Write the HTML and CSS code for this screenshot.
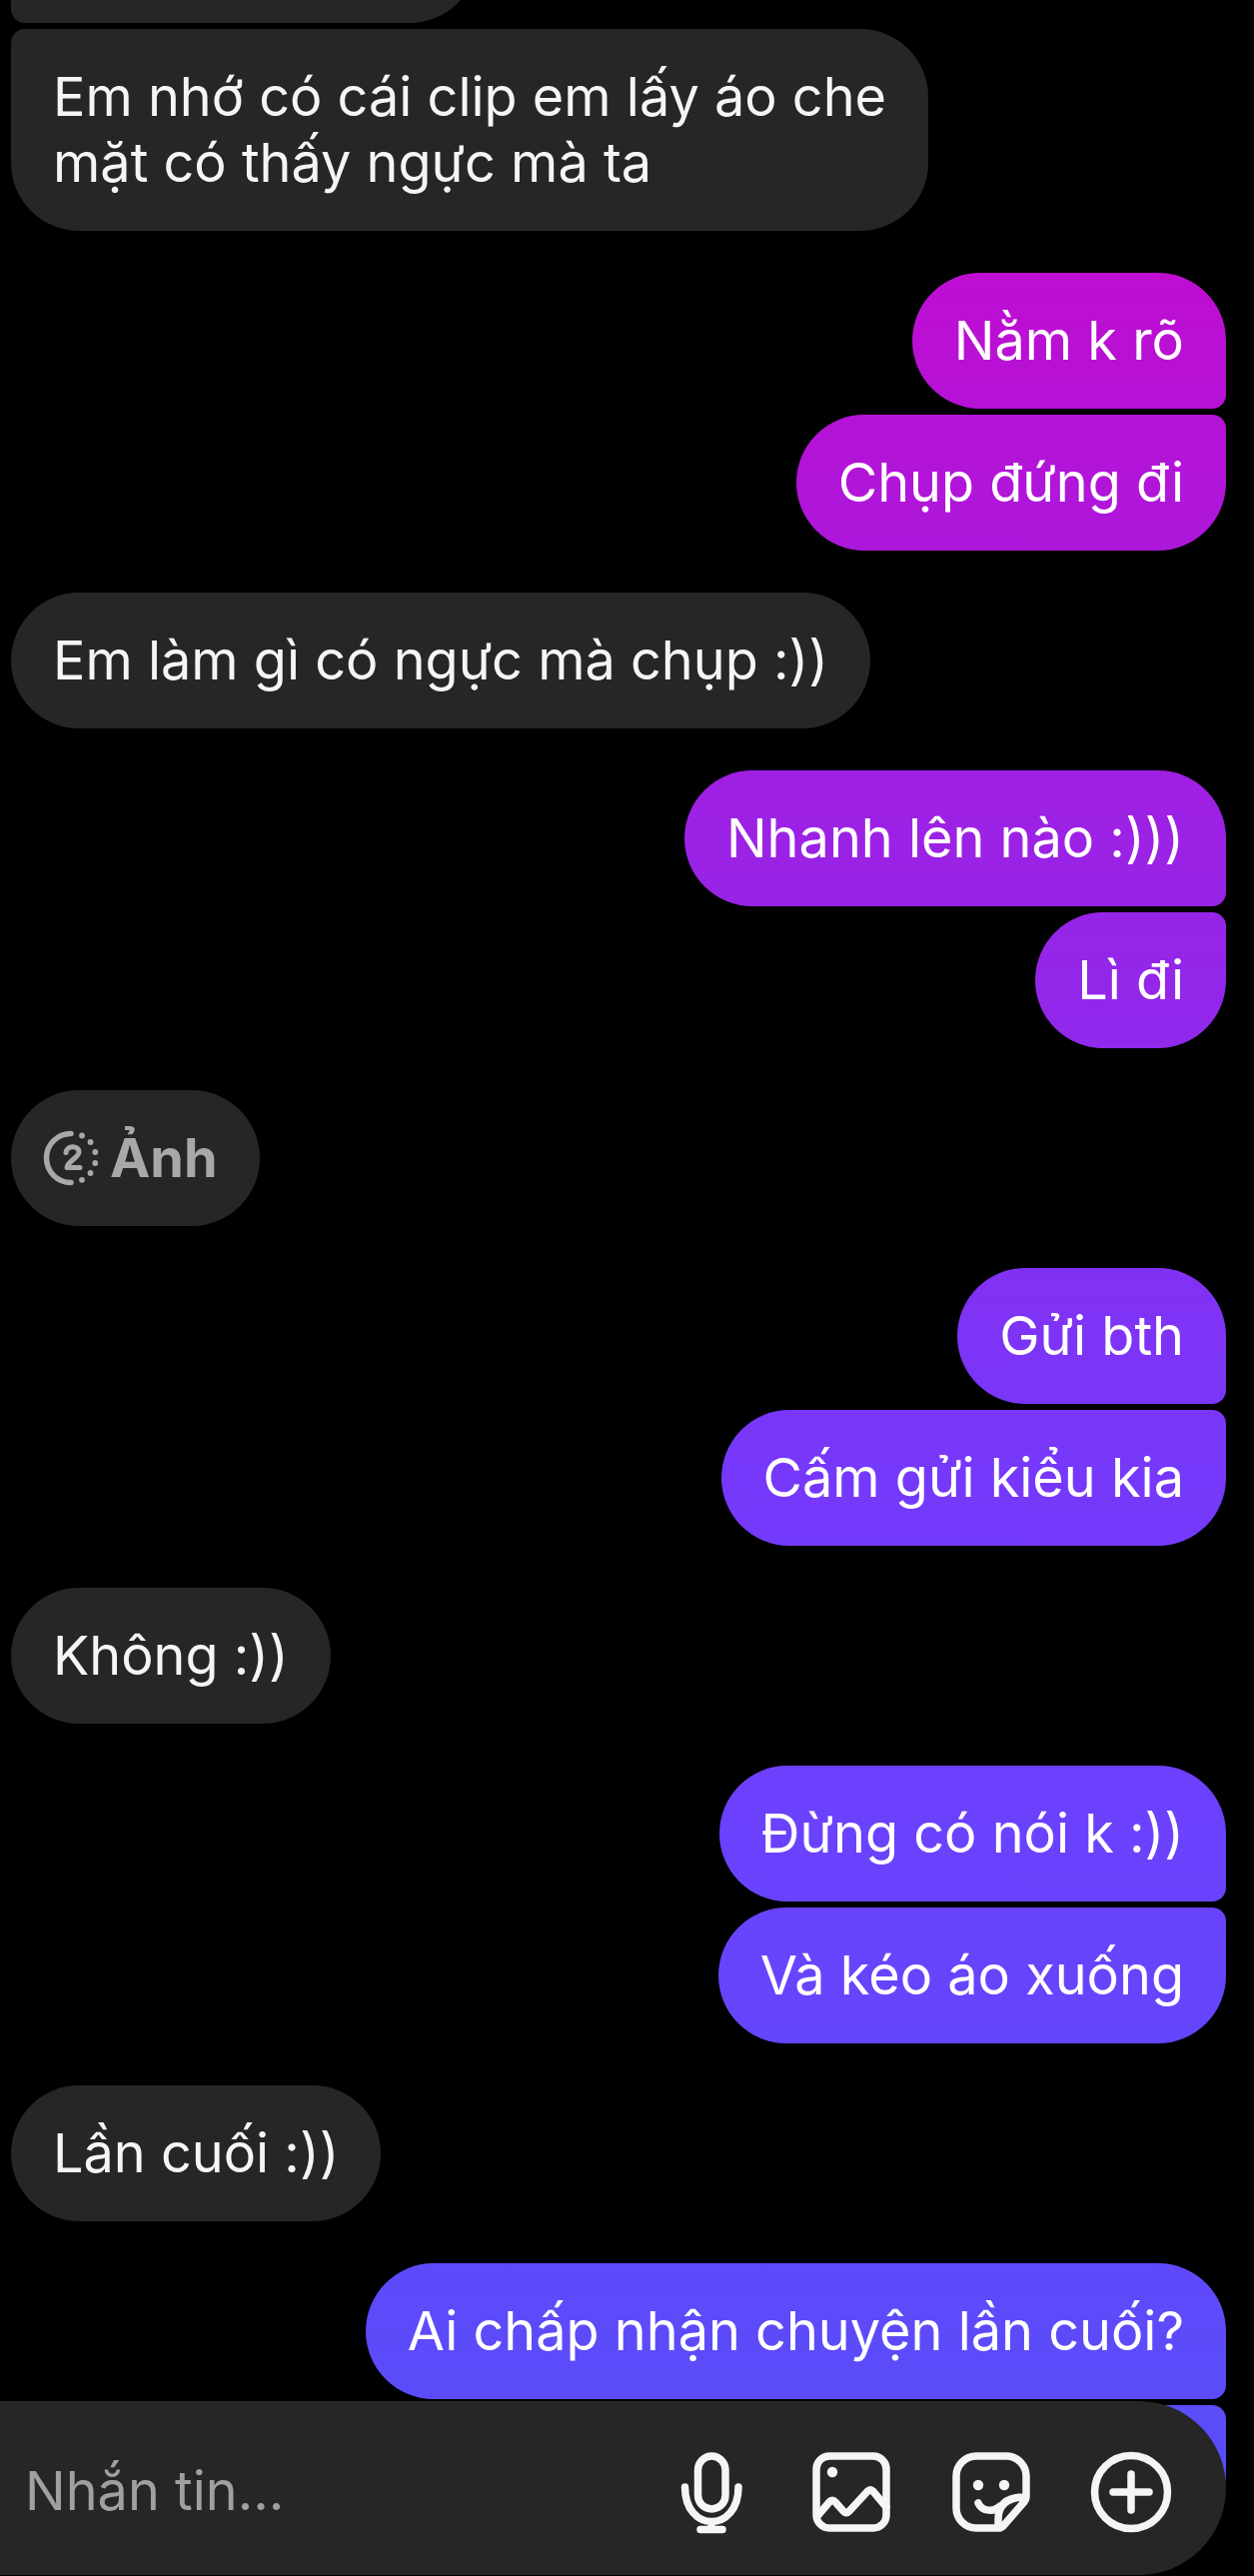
FILE: index.html
```html
<!DOCTYPE html>
<html lang="vi">
<head>
<meta charset="utf-8">
<meta name="viewport" content="width=device-width, initial-scale=1">
<title>Tin nhắn</title>
<link rel="stylesheet" href="styles.css">
</head>
<body>
<main class="thread">
  <section class="group received">
    <p class="bubble clipped"></p>
    <p class="bubble">Em nhớ có cái clip em lấy áo che<br>mặt có thấy ngực mà ta</p>
  </section>
  <section class="group sent">
    <p class="bubble">Nằm k rõ</p>
    <p class="bubble">Chụp đứng đi</p>
  </section>
  <section class="group received">
    <p class="bubble">Em làm gì có ngực mà chụp :))</p>
  </section>
  <section class="group sent">
    <p class="bubble">Nhanh lên nào :)))</p>
    <p class="bubble">Lì đi</p>
  </section>
  <section class="group received">
    <p class="bubble photo">
      <svg class="photo-icon" viewBox="0 0 56 56" aria-hidden="true">
        <path d="M28 3.500A24.500 24.500 0 0 0 28 52.500" fill="none" stroke="currentColor" stroke-width="5.500" stroke-linecap="round"/>
        <path d="M23 22.500C23.500 15 36 15 36 22C36 27.500 24.500 31 24 37.500H37" fill="none" stroke="currentColor" stroke-width="5" stroke-linecap="round" stroke-linejoin="round"/>
        <g fill="currentColor">
          <circle cx="39" cy="5.500" r="2.900"/><circle cx="47.500" cy="12" r="2.900"/><circle cx="52.300" cy="22" r="2.900"/>
          <circle cx="52.300" cy="33" r="2.900"/><circle cx="47.500" cy="43" r="2.900"/><circle cx="39" cy="49.800" r="2.900"/>
        </g>
      </svg>
      <span>Ảnh</span>
    </p>
  </section>
  <section class="group sent">
    <p class="bubble">Gửi bth</p>
    <p class="bubble">Cấm gửi kiểu kia</p>
  </section>
  <section class="group received">
    <p class="bubble">Không :))</p>
  </section>
  <section class="group sent">
    <p class="bubble">Đừng có nói k :))</p>
    <p class="bubble">Và kéo áo xuống</p>
  </section>
  <section class="group received">
    <p class="bubble">Lần cuối :))</p>
  </section>
  <section class="group sent">
    <p class="bubble">Ai chấp nhận chuyện lần cuối?</p>
    <p class="bubble clipped"></p>
  </section>
</main>
<form class="composer">
  <input class="composer-input" type="text" placeholder="Nhắn tin..." aria-label="Nhắn tin">
  <button class="tool" type="button" aria-label="Ghi âm">
    <svg viewBox="0 0 96 96"><g fill="none" stroke="currentColor" stroke-width="7.500" stroke-linecap="round" stroke-linejoin="round"><rect x="34.500" y="14" width="27.500" height="53" rx="13.750"/><path d="M21.500 45C21.500 91 75 91 75 45M48 80V87M37 87.500H59"/></g></svg>
  </button>
  <button class="tool" type="button" aria-label="Ảnh">
    <svg viewBox="0 0 96 96"><g fill="none" stroke="currentColor" stroke-width="7.500" stroke-linecap="round" stroke-linejoin="round"><rect x="13" y="14" width="70" height="72" rx="13"/><path d="M14 74L26 60Q29 56.500 32 60L40 69Q43 72 46 69L64 49.500Q67 46.500 70 49.500L83 65"/></g><circle cx="29" cy="30" r="5.200" fill="currentColor"/></svg>
  </button>
  <button class="tool" type="button" aria-label="Nhãn dán">
    <svg viewBox="0 0 96 96"><g fill="none" stroke="currentColor" stroke-width="7.500" stroke-linecap="round" stroke-linejoin="round"><path d="M55 86H33A20 20 0 0 1 13 66V34A20 20 0 0 1 33 14H63A20 20 0 0 1 83 34V54Q83 58 80 61L60 84Q58 86 55 86V77Q55 55 82 55M35 61C39 70 51 70 57 64"/></g><g fill="currentColor"><circle cx="35" cy="43" r="5.200"/><circle cx="61" cy="43" r="5.200"/></g></svg>
  </button>
  <button class="tool" type="button" aria-label="Thêm">
    <svg viewBox="0 0 96 96"><g fill="none" stroke="currentColor" stroke-width="7.500" stroke-linecap="round"><circle cx="48" cy="50" r="36.500"/><path d="M48 32V68M30 50H66"/></g></svg>
  </button>
</form>
</body>
</html>
```
FILE: styles.css
```css
* { box-sizing: border-box; }

body {
  margin: 0;
  background: #000;
  color: #f5f5f5;
  font-family: Inter, "Noto Sans", sans-serif;
  font-size: 54px;
  line-height: 66px;
}

.thread {
  display: flex;
  flex-direction: column;
  justify-content: flex-end;
  gap: 42px;
  height: 100vh;
  padding: 0 28px 35px 11px;
  overflow: hidden;
}

.group {
  display: flex;
  flex-direction: column;
  gap: 6px;
}

.received { align-items: flex-start; }
.sent { align-items: flex-end; }

.bubble {
  flex: none;
  max-width: 80%;
  min-height: 136px;
  margin: 0;
  padding: 35px 42px;
  border-radius: 68px;
  background: #262626;
}

.sent .bubble {
  background: linear-gradient(#ce04c8 0%, #7638fa 57%, #6a42fd 72%, #564ff8 100%) fixed;
  color: #fff;
}

.received .bubble:not(:last-child) { border-bottom-left-radius: 14px; }
.received .bubble:not(:first-child) { border-top-left-radius: 14px; }
.sent .bubble:not(:last-child) { border-bottom-right-radius: 14px; }
.sent .bubble:not(:first-child) { border-top-right-radius: 14px; }

.clipped { width: 467px; }

.photo {
  display: flex;
  align-items: center;
  gap: 11px;
  padding-left: 32px;
  color: #a8a8a8;
  font-weight: 700;
}

.photo-icon {
  width: 56px;
  height: 56px;
}

.composer {
  position: fixed;
  bottom: 1px;
  left: 0;
  right: 28px;
  display: flex;
  align-items: center;
  gap: 44px;
  height: 174px;
  padding: 4px 47px 0 25px;
  border-radius: 0 87px 87px 0;
  background: #262626;
}

.composer-input {
  flex: 1;
  min-width: 0;
  height: 100%;
  padding: 0;
  border: 0;
  background: none;
  color: #f5f5f5;
  font: inherit;
  outline: 0;
}

.composer-input::placeholder {
  color: #a0a0a0;
  opacity: 1;
}

.tool {
  flex: none;
  width: 96px;
  height: 96px;
  padding: 0;
  border: 0;
  background: none;
  color: #f5f5f5;
}

.tool svg {
  display: block;
  width: 100%;
  height: 100%;
}
```
